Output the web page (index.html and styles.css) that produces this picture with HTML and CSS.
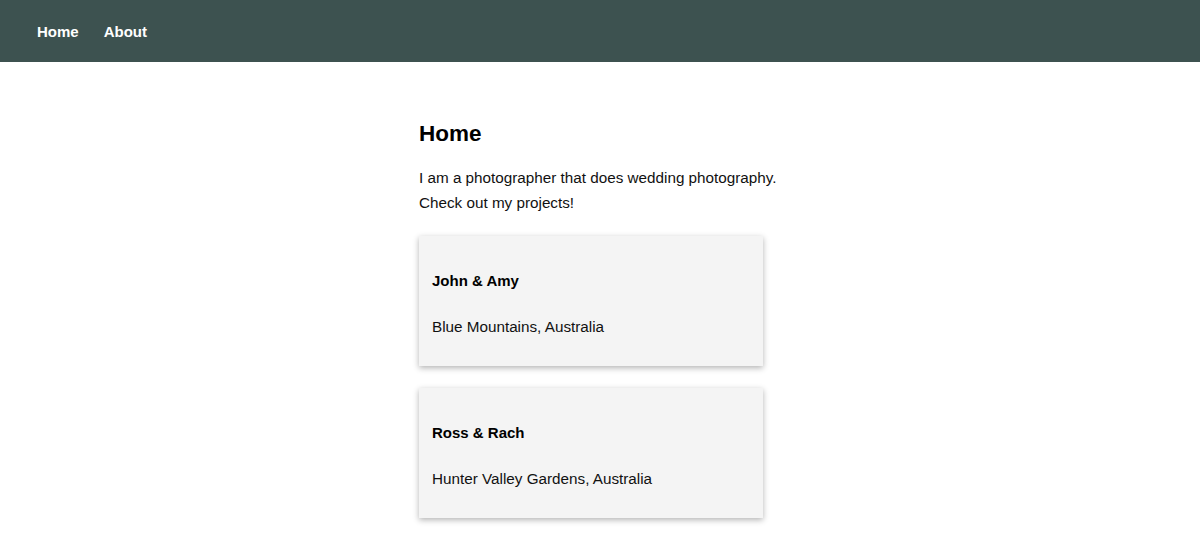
FILE: index.html
```html
<!DOCTYPE html>
<html lang="en">
<head>
<meta charset="utf-8">
<title>Home</title>
<link rel="stylesheet" href="styles.css">
</head>
<body>
<header class="topbar">
  <nav class="nav">
    <a class="nav-link" href="#">Home</a>
    <a class="nav-link" href="#">About</a>
  </nav>
</header>
<main class="content">
  <h1 class="page-title">Home</h1>
  <p class="intro">I am a photographer that does wedding photography.<br>Check out my projects!</p>
  <div class="projects">
    <article class="card">
      <h3 class="card-title">John &amp; Amy</h3>
      <p class="card-text">Blue Mountains, Australia</p>
    </article>
    <article class="card">
      <h3 class="card-title">Ross &amp; Rach</h3>
      <p class="card-text">Hunter Valley Gardens, Australia</p>
    </article>
  </div>
</main>
</body>
</html>
```
FILE: styles.css
```css
* { box-sizing: border-box; }
body {
  margin: 0;
  font-family: "Liberation Sans", Arial, sans-serif;
  color: #111;
  background: #fff;
}
.topbar {
  height: 62px;
  background: #3d5250;
  display: flex;
  align-items: center;
  padding-left: 37px;
}
.nav {
  display: flex;
  gap: 25px;
}
.nav-link {
  color: #fff;
  font-weight: bold;
  font-size: 15px;
  text-decoration: none;
}
.content {
  width: 362px;
  margin: 0 auto;
  padding: 59px 0 40px;
}
.page-title {
  margin: 0;
  font-size: 22.5px;
  line-height: 26px;
  font-weight: bold;
  color: #000;
}
.intro {
  margin: 18px 0 0;
  font-size: 15.25px;
  line-height: 25px;
  white-space: nowrap;
}
.projects {
  margin-top: 21px;
  display: flex;
  flex-direction: column;
  gap: 22px;
}
.card {
  width: 344px;
  background: #f4f4f4;
  padding: 13px;
  box-shadow: 0 2px 6px rgba(0,0,0,0.3);
}
.card-title {
  margin: 23px 0 27px;
  font-size: 15px;
  line-height: 18px;
  font-weight: bold;
  color: #000;
}
.card-text {
  margin: 0 0 16px;
  font-size: 15.25px;
  line-height: 20px;
}
```
